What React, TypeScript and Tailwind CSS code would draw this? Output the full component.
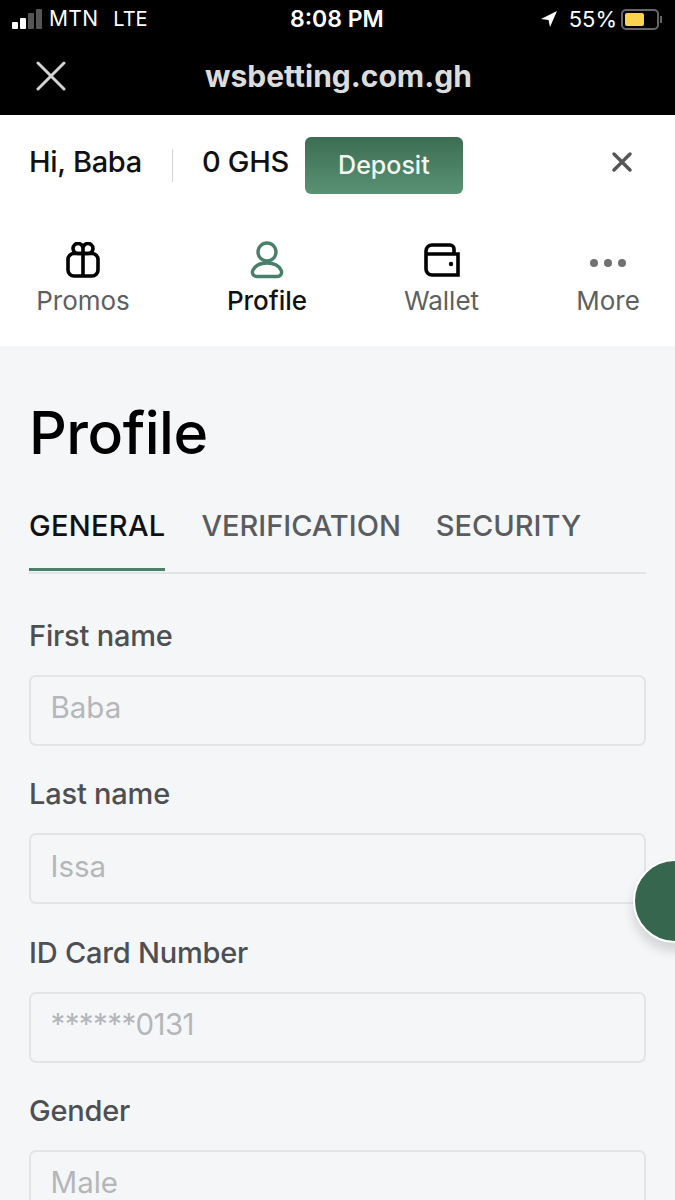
import React from "react";

const font = { fontFamily: "Inter, 'Liberation Sans', sans-serif" };

function Field({ label, value, tight }: { label: string; value: string; tight?: boolean }) {
  return (
    <div className="mb-[31.3px]">
      <div className="text-[29px] leading-[34px] font-medium text-[#4d4f53] mb-[22px] tracking-[-0.2px]">{label}</div>
      <div className={`h-[71px] border-2 border-[#e3e4e7] rounded-[7px] flex items-center pl-[19.5px] pb-[6px] text-[29.5px] text-[#b4b6ba] ${tight ? "tracking-[-0.6px]" : ""}`}>{value}</div>
    </div>
  );
}

function NavItem({ icon, label, className }: { icon: React.ReactNode; label: string; className: string }) {
  return (
    <div className={`flex flex-col items-center ${className}`}>
      <div className="h-[40px] flex items-center justify-center">{icon}</div>
      <div className="text-[26px] leading-[34px] mt-[4px] whitespace-nowrap">{label}</div>
    </div>
  );
}

export default function App() {
  return (
    <div className="w-[675px] h-[1200px] overflow-hidden relative bg-[#f5f6f8]" style={font}>
      <div className="h-[115px] bg-black text-white flex flex-col">
        <div className="h-[38px] flex items-center justify-between pl-[12px] pr-[13px] relative">
          <div className="flex items-center">
            <div className="flex items-end gap-[2px] h-[20px] mr-[7px]">
              <div className="w-[6px] h-[7px] bg-white rounded-[1px]" />
              <div className="w-[6px] h-[11px] bg-white rounded-[1px]" />
              <div className="w-[6px] h-[16px] bg-[#555] rounded-[1px]" />
              <div className="w-[6px] h-[20px] bg-[#555] rounded-[1px]" />
            </div>
            <span className="text-[21px] tracking-[0.3px] mr-[15px]">MTN</span>
            <span className="text-[20px]">LTE</span>
          </div>
          <div className="absolute left-[290px] top-[3px] text-[23px] leading-[32px] font-semibold">8:08 PM</div>
          <div className="flex items-center">
            <svg width="18" height="18" viewBox="0 0 18 18" className="mr-[11px]"><path d="M17 1 L1 9 L8.5 10 L10 17 Z" fill="#fff" /></svg>
            <span className="text-[22px] mr-[4px]">55%</span>
            <div className="w-[38px] h-[21px] border-2 border-[#666] rounded-[5px] p-[2px]">
              <div className="w-[19px] h-full bg-[#fcd34d] rounded-[2px]" />
            </div>
            <div className="w-[2px] h-[7px] bg-[#666] ml-[1px]" />
          </div>
        </div>
        <div className="flex-1 flex items-center relative pb-[1px]">
          <svg width="30" height="30" viewBox="0 0 30 30" className="ml-[36px]" fill="none" stroke="#d4d4d4" strokeWidth="3" strokeLinecap="round"><path d="M2 2 L28 28 M28 2 L2 28" /></svg>
          <div className="absolute left-[205px] text-[30px] font-bold text-[#dcdcdc]">wsbetting.com.gh</div>
        </div>
      </div>

      <div className="h-[231px] bg-white">
        <div className="h-[125px] flex items-start pl-[29px] pr-[43px] pt-[22px]">
          <span className="text-[29px] leading-[50px] font-medium text-[#111] tracking-[-0.3px]">Hi, Baba</span>
          <div className="w-[1px] h-[33px] bg-[#d5d5d5] ml-[30px] mt-[12px]" />
          <span className="text-[29px] leading-[50px] font-medium text-[#111] ml-[29px] tracking-[-0.3px]">0 GHS</span>
          <div className="w-[158px] h-[57px] ml-[16px] rounded-[6px] bg-gradient-to-b from-[#3c6d52] to-[#5a9274] flex items-center justify-center text-[25px] font-medium text-[#f2f6f3]">Deposit</div>
          <svg width="20" height="20" viewBox="0 0 20 20" className="ml-auto mt-[15px]" fill="none" stroke="#555" strokeWidth="3.4" strokeLinecap="round"><path d="M2 2 L18 18 M18 2 L2 18" /></svg>
        </div>
        <div className="relative flex justify-between pl-[36px] pr-[36px] text-[#5e5f62]">
          <NavItem label="Promos" className="w-[94px]" icon={
            <svg width="34" height="36" viewBox="0 0 34 36" fill="none" stroke="#000" strokeWidth="3.6"><rect x="2" y="11.5" width="30" height="22.5" rx="6" /><path d="M17 11.5 V34 M17 11.5 V7 a5 5 0 1 0 -5 4.5 H22 a5 5 0 1 0 -5 -4.5" /></svg>
          } />
          <NavItem label="Profile" className="w-[78px] text-[#111] font-medium" icon={
            <svg width="34" height="38" viewBox="0 0 34 38" fill="none" stroke="#49806a" strokeWidth="3.4"><circle cx="17" cy="11" r="9" /><path d="M7 35.5 H27 C31 35.5 32.5 32 31 29 C29 25 24 22 17 22 C10 22 5 25 3 29 C1.5 32 3 35.5 7 35.5 Z" /></svg>
          } />
          <NavItem label="Wallet" className="w-[75px]" icon={
            <svg width="36" height="34" viewBox="0 0 36 34" fill="none" stroke="#000" strokeWidth="3.6"><path d="M2 10 V26 a6 6 0 0 0 6 6 H34 V11 H2 M2 10 V8 a6 6 0 0 1 6-6 H26 a4 4 0 0 1 4 4 V11" /><circle cx="27" cy="21" r="2.2" fill="#000" stroke="none" /></svg>
          } />
          <NavItem label="More" className="w-[62px]" icon={
            <div className="flex gap-[6px] mt-[5px]">
              <div className="w-[8px] h-[8px] rounded-full bg-[#707070]" />
              <div className="w-[8px] h-[8px] rounded-full bg-[#707070]" />
              <div className="w-[8px] h-[8px] rounded-full bg-[#707070]" />
            </div>
          } />
        </div>
      </div>

      <div className="px-[29px]">
        <h1 className="text-[59px] leading-[70px] font-medium text-black mt-[52px] tracking-[-0.5px]">Profile</h1>
        <div className="mt-[30px] h-[76px] border-b-2 border-[#e3e4e7] flex text-[29px] leading-[40px] font-medium text-[#5a5c60] gap-[36px] pt-[8px]">
          <div className="relative h-[65px] text-[#111] tracking-[0.3px]">GENERAL<div className="absolute left-0 right-0 bottom-0 h-[3px] bg-[#49806a]" /></div>
          <div>VERIFICATION</div>
          <div className="-ml-[1px]">SECURITY</div>
        </div>
        <div className="mt-[45px]">
          <Field label="First name" value="Baba" />
          <Field label="Last name" value="Issa" />
          <Field label="ID Card Number" value="******0131" tight />
          <Field label="Gender" value="Male" />
        </div>
      </div>

      <div className="absolute left-[633px] top-[859px] w-[84px] h-[84px] rounded-full bg-[#36664e] border-2 border-white shadow-[0_8px_12px_rgba(0,0,0,0.15)]" />
    </div>
  );
}
